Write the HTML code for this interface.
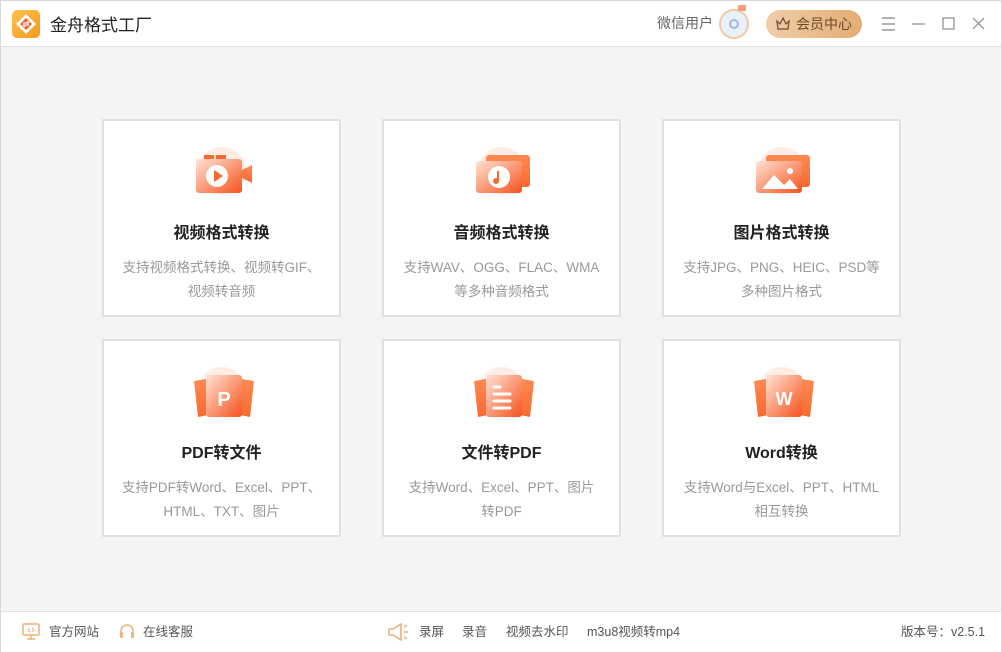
<!DOCTYPE html>
<html><head><meta charset="utf-8"><style>
*{margin:0;padding:0;box-sizing:border-box}
body{width:1002px;height:652px;overflow:hidden;font-family:"Liberation Sans","Noto Sans CJK SC",sans-serif;background:#f4f4f4;position:relative;border:1px solid #d8d8d8}
.top{position:absolute;left:0;top:0;width:1000px;height:46px;background:#fff;border-bottom:1px solid #e0e0e0}
.foot{position:absolute;left:0;top:610px;width:1000px;height:41px;background:#fff;border-top:1px solid #e0e0e0;font-size:12.5px;color:#555}
.card{position:absolute;width:239px;height:198px;background:#fff;border:2px solid #e0e0e0;text-align:center}
.card svg{position:absolute;left:88px;top:20px}
.card h3{position:absolute;top:98px;width:100%;font-size:16px;font-weight:bold;color:#222}
.card p{position:absolute;top:135px;left:0;right:0;font-size:13.5px;line-height:24px;color:#999;white-space:nowrap}
.ft{position:absolute;top:9px}
</style></head><body>
<div class="top">
 <svg style="position:absolute;left:11px;top:9px" width="28" height="28" viewBox="0 0 28 28"><defs><linearGradient id="lg" x1="0" y1="0" x2="1" y2="1"><stop offset="0" stop-color="#ffc04d"/><stop offset="1" stop-color="#f59a1f"/></linearGradient></defs><rect width="28" height="28" rx="5" fill="url(#lg)"/><path d="M14 4L24 14 14 24 4 14Z" fill="#fff"/><path d="M14 8L20 14 14 20 8 14Z" fill="#f4612a"/><path d="M11 13h6M15 11l2 2M17 15h-6M13 17l-2-2" stroke="#fff" stroke-width="1.3" fill="none"/></svg>
 <div style="position:absolute;left:49px;top:10px;font-size:17px;color:#222">金舟格式工厂</div>
 <div style="position:absolute;left:656px;top:12px;font-size:14px;color:#666">微信用户</div>
 <div style="position:absolute;left:718px;top:8px;width:30px;height:30px;border-radius:50%;background:#e8f0fa;border:2px solid #f3c9a6"><div style="position:absolute;left:8px;top:8px;width:10px;height:10px;border-radius:50%;border:2px solid #9fb5d8"></div></div>
 <div style="position:absolute;left:737px;top:4px;width:8px;height:6px;background:#f2a07a"></div>
 <div style="position:absolute;left:765px;top:9px;width:96px;height:28px;border-radius:14px;background:linear-gradient(90deg,#f1ccaa,#e3ad72);font-size:14px;color:#6b4a2a;line-height:28px;padding-left:30px">会员中心</div>
 <svg style="position:absolute;left:775px;top:16px" width="14" height="13" viewBox="0 0 14 13"><path d="M1 4l3 3 3-6 3 6 3-3-1 8H2Z" fill="none" stroke="#6b4a2a" stroke-width="1.2"/></svg>
 <svg style="position:absolute;left:880px;top:15px" width="110" height="16" viewBox="0 0 110 16"><g stroke="#999" stroke-width="1.4" fill="none"><path d="M1 2h13M1 8h13M1 14h13"/><path d="M31 8h13"/><rect x="62" y="2" width="11" height="11"/><path d="M92 2l11 11M103 2L92 13"/></g></svg>
</div>

<svg width="0" height="0" style="position:absolute"><defs>
<linearGradient id="og" x1="0" y1="0" x2="1" y2="1"><stop offset="0" stop-color="#ffe3d6"/><stop offset="1" stop-color="#f5521c"/></linearGradient>
<linearGradient id="og2" x1="0" y1="0" x2="0" y2="1"><stop offset="0" stop-color="#ff8a52"/><stop offset="1" stop-color="#f66a30"/></linearGradient>
</defs></svg>

<div class="card" style="left:101px;top:118px"><svg width="64" height="60" viewBox="0 0 64 60"><circle cx="30" cy="30" r="24" fill="#ffece4"/><rect x="12" y="14" width="10" height="4" fill="#f66a30"/><rect x="24" y="14" width="10" height="4" fill="#f66a30"/><path d="M48 30l12-6v18l-12-6z" fill="url(#og2)"/><rect x="4" y="18" width="46" height="34" rx="3" fill="url(#og)"/><circle cx="25" cy="35" r="11" fill="#fff"/><path d="M22 29v12l9-6z" fill="#f66a30"/></svg><h3>视频格式转换</h3><p>支持视频格式转换、视频转GIF、<br>视频转音频</p></div>
<div class="card" style="left:381px;top:118px"><svg width="64" height="60" viewBox="0 0 64 60"><circle cx="30" cy="30" r="24" fill="#ffece4"/><rect x="14" y="14" width="44" height="32" rx="3" fill="url(#og2)"/><rect x="4" y="20" width="46" height="32" rx="3" fill="url(#og)"/><circle cx="27" cy="36" r="11" fill="#fff"/><path d="M26 30v10" stroke="#f66a30" stroke-width="2"/><circle cx="24" cy="40" r="3" fill="#f66a30"/></svg><h3>音频格式转换</h3><p>支持WAV、OGG、FLAC、WMA<br>等多种音频格式</p></div>
<div class="card" style="left:661px;top:118px"><svg width="64" height="60" viewBox="0 0 64 60"><circle cx="30" cy="30" r="24" fill="#ffece4"/><rect x="14" y="14" width="44" height="32" rx="3" fill="url(#og2)"/><rect x="4" y="20" width="46" height="32" rx="3" fill="url(#og)"/><path d="M10 48l12-14 10 10 6-6 8 10z" fill="#fff"/><circle cx="38" cy="30" r="3" fill="#fff"/></svg><h3>图片格式转换</h3><p>支持JPG、PNG、HEIC、PSD等<br>多种图片格式</p></div>

<div class="card" style="left:101px;top:338px"><svg width="64" height="60" viewBox="0 0 64 60"><circle cx="30" cy="30" r="24" fill="#ffece4"/><path d="M2 20l12-2 2 36-10 2z" fill="url(#og2)"/><path d="M62 20l-12-2-2 36 10 2z" fill="url(#og2)"/><rect x="14" y="14" width="36" height="42" rx="3" fill="url(#og)"/><text x="32" y="45" font-size="20" font-weight="bold" fill="#fff" text-anchor="middle" font-family="Liberation Sans">P</text></svg><h3>PDF转文件</h3><p>支持PDF转Word、Excel、PPT、<br>HTML、TXT、图片</p></div>
<div class="card" style="left:381px;top:338px"><svg width="64" height="60" viewBox="0 0 64 60"><circle cx="30" cy="30" r="24" fill="#ffece4"/><path d="M2 20l12-2 2 36-10 2z" fill="url(#og2)"/><path d="M62 20l-12-2-2 36 10 2z" fill="url(#og2)"/><rect x="14" y="14" width="36" height="42" rx="3" fill="url(#og)"/><g stroke="#fff" stroke-width="3" stroke-linecap="round"><path d="M22 26h6M22 33h16M22 40h16M22 47h16"/></g></svg><h3>文件转PDF</h3><p>支持Word、Excel、PPT、图片<br>转PDF</p></div>
<div class="card" style="left:661px;top:338px"><svg width="64" height="60" viewBox="0 0 64 60"><circle cx="30" cy="30" r="24" fill="#ffece4"/><path d="M2 20l12-2 2 36-10 2z" fill="url(#og2)"/><path d="M62 20l-12-2-2 36 10 2z" fill="url(#og2)"/><rect x="14" y="14" width="36" height="42" rx="3" fill="url(#og)"/><text x="32" y="44" font-size="18" font-weight="bold" fill="#fff" text-anchor="middle" font-family="Liberation Sans">W</text></svg><h3>Word转换</h3><p>支持Word与Excel、PPT、HTML<br>相互转换</p></div>

<div class="foot">
 <svg class="ft" style="left:21px;top:11px" width="18" height="17" viewBox="0 0 18 17"><rect x="1" y="1" width="16" height="11" rx="1" fill="none" stroke="#eab47a" stroke-width="1.5"/><path d="M5 16h8M9 12v4" stroke="#eab47a" stroke-width="1.5"/><path d="M8 5l-2 2 2 2M10 5l2 2-2 2" stroke="#eab47a" fill="none"/></svg>
 <span class="ft" style="left:48px">官方网站</span>
 <svg class="ft" style="left:117px;top:11px" width="18" height="18" viewBox="0 0 18 18"><path d="M3 10V8a6 6 0 0112 0v2" fill="none" stroke="#eab47a" stroke-width="1.6"/><rect x="2" y="9" width="3" height="6" rx="1" fill="#eab47a"/><rect x="13" y="9" width="3" height="6" rx="1" fill="#eab47a"/></svg>
 <span class="ft" style="left:142px">在线客服</span>
 <svg class="ft" style="left:386px;top:11px" width="22" height="18" viewBox="0 0 22 18"><path d="M2 6h4l8-5v16l-8-5H2z" fill="none" stroke="#eab47a" stroke-width="1.6"/><path d="M17 4l3-2M17 9h4M17 14l3 2" stroke="#eab47a" stroke-width="1.5"/></svg>
 <span class="ft" style="left:418px">录屏</span>
 <span class="ft" style="left:461px">录音</span>
 <span class="ft" style="left:505px">视频去水印</span>
 <span class="ft" style="left:586px">m3u8视频转mp4</span>
 <span class="ft" style="left:900px">版本号：v2.5.1</span>
</div>
</body></html>
